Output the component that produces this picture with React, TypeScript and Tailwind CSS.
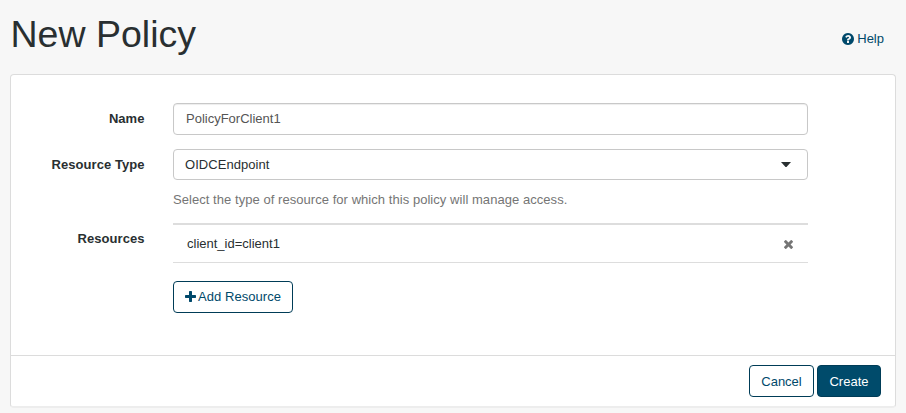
import type { ReactNode } from 'react';

function QuestionIcon() {
  return (
    <svg className="h-3 w-3 shrink-0" viewBox="0 0 1536 1536" fill="currentColor">
      <path d="M896 1248v-192q0-14-9-23t-23-9H672q-14 0-23 9t-9 23v192q0 14 9 23t23 9h192q14 0 23-9t9-23zm256-672q0-88-55.500-163T958 297t-170-41q-243 0-371 213-15 24 8 42l132 100q7 6 19 6 16 0 25-12 53-68 86-92 34-24 86-24 48 0 85.500 26t37.500 59q0 38-20 61t-68 45q-63 28-115.500 86.500T640 892v36q0 14 9 23t23 9h192q14 0 23-9t9-23q0-19 21.500-49.500T972 829q32-18 49-28.500t46-35 44.500-48 28-60.500 12.500-81zm384 192q0 209-103 385.500T1153.500 1433 768 1536t-385.500-103T103 1153.500 0 768t103-385.500T382.500 103 768 0t385.500 103T1433 382.500 1536 768z" />
    </svg>
  );
}

function PlusIcon() {
  return (
    <svg className="h-[11px] w-[11px] shrink-0" viewBox="0 0 1408 1408" fill="currentColor">
      <path d="M1408 608v192q0 40-28 68t-68 28H896v416q0 40-28 68t-68 28H608q-40 0-68-28t-28-68V896H96q-40 0-68-28T0 800V608q0-40 28-68t68-28h416V96q0-40 28-68t68-28h192q40 0 68 28t28 68v416h416q40 0 68 28t28 68z" />
    </svg>
  );
}

function TimesIcon() {
  return (
    <svg className="h-[9px] w-[9px]" viewBox="0 0 1188 1188" fill="currentColor">
      <path d="M1188 956q0 40-28 68l-136 136q-28 28-68 28t-68-28L594 866l-294 294q-28 28-68 28t-68-28L28 1024q-28-28-28-68t28-68l294-294L28 300Q0 272 0 232t28-68L164 28q28-28 68-28t68 28l294 294L888 28q28-28 68-28t68 28l136 136q28 28 28 68t-28 68L866 594l294 294q28 28 28 68z" />
    </svg>
  );
}

function Label({ children }: { children: ReactNode }) {
  return <div className="w-[134px] shrink-0 pt-1.5 pr-[0.5px] text-right font-bold tracking-[0.05px]">{children}</div>;
}

export default function App() {
  return (
    <div className="h-[413px] w-[906px] overflow-hidden bg-[#f7f7f7] px-[10px] font-['Liberation_Sans',Arial,sans-serif] text-[13px] leading-5 text-[#292f31]">
      <header className="flex h-[74px] justify-between pr-3">
        <h1 className="pt-[13px] pl-[0.5px] text-[37.500px] leading-[42px]">New Policy</h1>
        <a className="mt-[29px] flex h-5 items-center gap-[3px] self-start text-[#00496b]">
          <QuestionIcon />
          Help
        </a>
      </header>

      <main className="flex h-[334px] w-[886px] flex-col rounded border border-b-2 border-[#dcdcdc] border-b-[#ededed] bg-white">
        <div className="h-[280px] pt-7">
          <div className="flex gap-7">
            <Label>Name</Label>
            <div className="flex h-8 w-[635px] items-center rounded border border-[#c8c8c8] px-3 pb-px text-[#555] shadow-[inset_0_1px_1px_rgba(0,0,0,0.075)]">
              PolicyForClient1
            </div>
          </div>

          <div className="mt-[14px] flex gap-7">
            <Label>Resource Type</Label>
            <div>
              <div className="flex h-[31px] w-[635px] items-center justify-between rounded border border-[#c8c8c8] pr-4 pl-[11px] tracking-[0.05px]">
                OIDCEndpoint
                <svg className="h-[5px] w-[10px]" viewBox="0 0 10 5" fill="#292f31">
                  <path d="M0 0h10L5.500 5h-1z" />
                </svg>
              </div>
              <p className="mt-[10px] tracking-[0.05px] text-[#757575]">
                Select the type of resource for which this policy will manage access.
              </p>
            </div>
          </div>

          <div className="mt-[13px] flex gap-7">
            <Label>Resources</Label>
            <div>
              <div className="flex h-10 w-[635px] items-center justify-between border-t-2 border-b border-[#ddd] pr-[15px] pl-[14px]">
                client_id=client1
                <span className="pt-px text-[#757575]"><TimesIcon /></span>
              </div>
              <button className="mt-[18px] flex h-8 w-[120px] items-center justify-center gap-[2px] rounded border border-[#003c57] pb-px text-[#00496b]">
                <PlusIcon />
                <span className="tracking-[0.05px]">Add Resource</span>
              </button>
            </div>
          </div>
        </div>

        <footer className="flex justify-end gap-[3px] border-t border-[#dcdcdc] pt-[9px] pr-[14px]">
          <button className="h-8 w-[65px] rounded border border-[#003c57] pt-0.5 text-[#00496b]">Cancel</button>
          <button className="h-8 w-[64px] rounded border border-[#003c57] bg-[#004b6b] pt-0.5 text-white">Create</button>
        </footer>
      </main>
    </div>
  );
}
